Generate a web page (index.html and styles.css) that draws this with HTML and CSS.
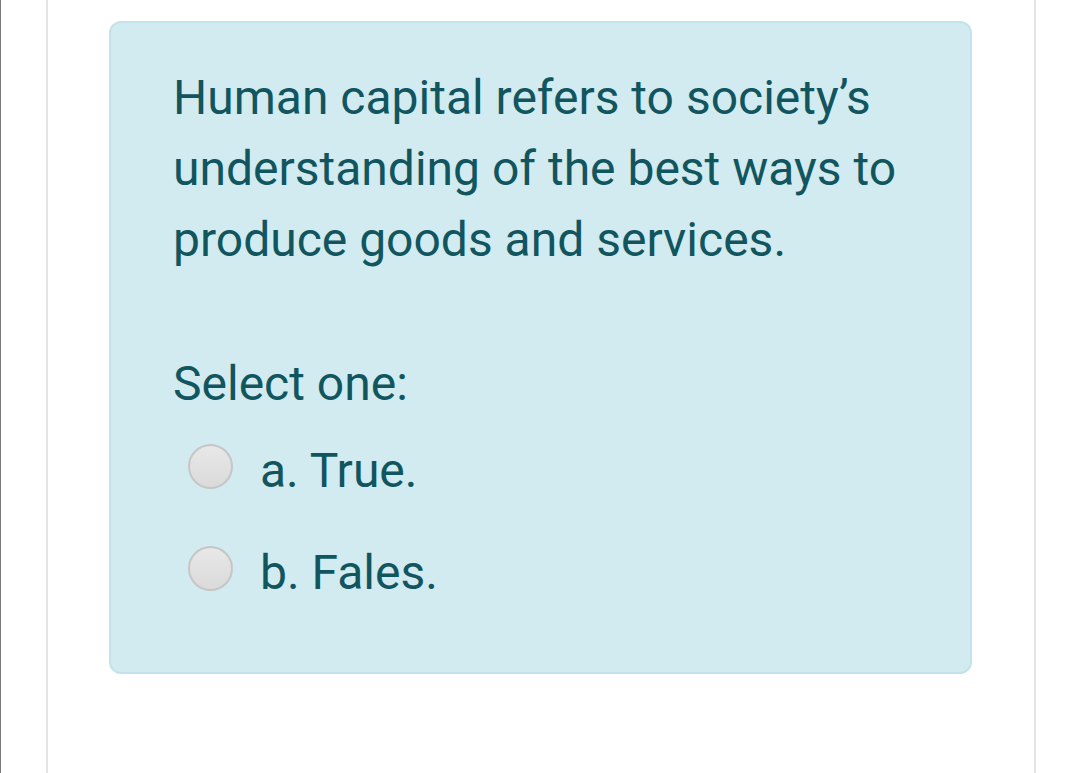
FILE: index.html
```html
<!DOCTYPE html>
<html lang="en">
<head>
    <meta charset="UTF-8">
    <title>Question</title>
    <link rel="stylesheet" href="styles.css">
</head>
<body>
    <div class="page">
        <div class="column">
            <div class="card">
                <p class="question">Human capital refers to society’s understanding of the best ways to produce goods and services.</p>
                <div class="prompt">Select one:</div>
                <div class="answers">
                    <label class="answer"><span class="radio"></span><span>a. True.</span></label>
                    <label class="answer"><span class="radio"></span><span>b. Fales.</span></label>
                </div>
            </div>
        </div>
    </div>
</body>
</html>
```

FILE: styles.css
```css
* {
    margin: 0;
    padding: 0;
    box-sizing: border-box;
}

body {
    background: #fff;
    font-family: Roboto, 'Noto Sans', sans-serif;
    color: #11555f;
    overflow: hidden;
}

.page {
    height: 773px;
    border-left: 1px solid #7a7a7a;
    padding-left: 45px;
}

.column {
    width: 990px;
    height: 100%;
    border-left: 2px solid #e4e4e4;
    border-right: 2px solid #e4e4e4;
    padding: 21px 62px 0 61px;
}

.card {
    height: 653px;
    background: #d2ebf0;
    border: 2px solid #c2e3ea;
    border-radius: 12px;
    padding: 39px 40px 0 62px;
}

.question {
    font-size: 48px;
    line-height: 71px;
    width: 750px;
}

.prompt {
    font-size: 48px;
    line-height: 71px;
    margin-top: 73px;
}

.answers {
    display: flex;
    flex-direction: column;
    gap: 31px;
    margin-top: 12px;
}

.answer {
    display: flex;
    align-items: center;
    height: 71px;
    font-size: 48px;
    padding-left: 15px;
}

.answer span:last-child {
    margin-top: 8px;
}

.radio {
    width: 45px;
    height: 45px;
    border-radius: 50%;
    border: 2px solid #c6c6c6;
    background: linear-gradient(#e8e8e8, #dadada);
    margin-right: 27px;
}
```
